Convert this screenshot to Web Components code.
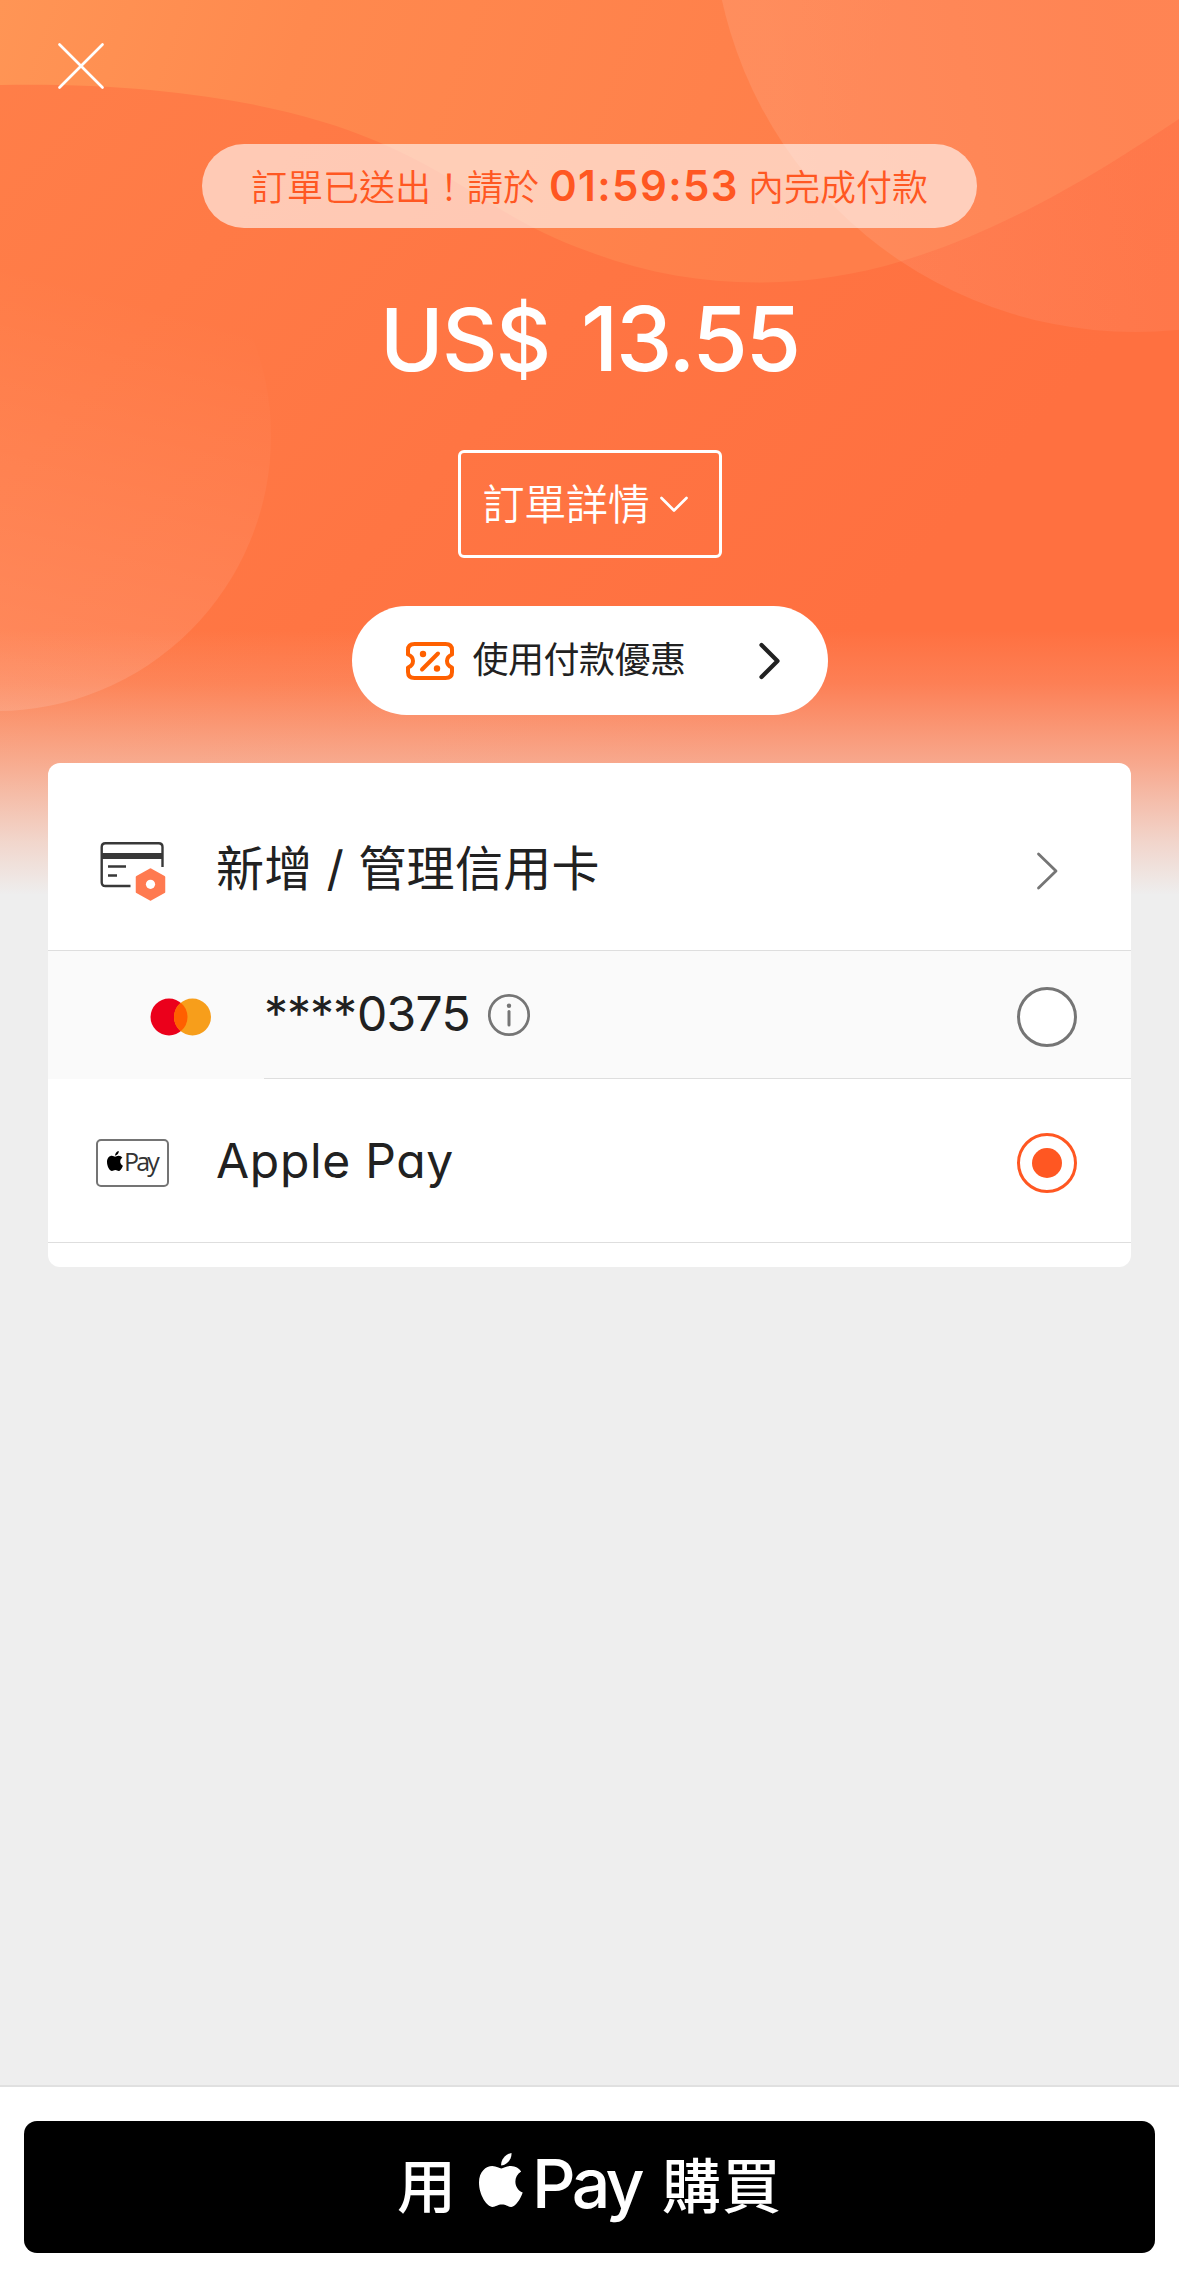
<!DOCTYPE html>
<html lang="zh-Hant">
<head>
<meta charset="utf-8">
<title>Checkout</title>
<style>
  html, body { margin: 0; padding: 0; }
  body { width: 1179px; height: 2277px; overflow: hidden; background: #eeeeee; font-family: Inter, "Noto Sans CJK TC", sans-serif; color: #212121; }
</style>
</head>
<body>
<payment-page></payment-page>
<script>
const define = (name, html, extra) => {
  const tpl = document.createElement('template');
  tpl.innerHTML = html;
  customElements.define(name, class extends HTMLElement {
    constructor() {
      super();
      this.attachShadow({ mode: 'open' }).appendChild(tpl.content.cloneNode(true));
    }
    connectedCallback() { if (extra) extra(this); }
  });
};

// Single line whose tracking is adjusted so that it fills the given width.
define('fit-text', `
<style>
  :host { display: block; white-space: nowrap; flex: none; }
  span { display: inline-block; white-space: pre; }
</style><span><slot></slot></span>`, el => {
  const target = parseFloat(el.getAttribute('width'));
  const n = parseInt(el.getAttribute('chars')) || [...el.textContent].length;
  el.style.width = target + 'px';
  const span = el.shadowRoot.querySelector('span');
  span.style.letterSpacing = ((target - span.getBoundingClientRect().width) / n) + 'px';
});

define('hero-backdrop', `
<style>
  :host { display: block; position: absolute; inset: 0 0 auto 0; height: 900px; z-index: -1; }
  svg { display: block; }
</style>
<svg width="1179" height="900" viewBox="0 0 1179 900">
  <defs>
    <linearGradient id="base" gradientUnits="userSpaceOnUse" x1="0" y1="0" x2="800" y2="700">
      <stop offset="0" stop-color="#ff7f49"/><stop offset=".6" stop-color="#ff7543"/><stop offset="1" stop-color="#ff7040"/>
    </linearGradient>
    <linearGradient id="wave" gradientUnits="userSpaceOnUse" x1="0" y1="0" x2="800" y2="280">
      <stop offset="0" stop-color="#ff9555"/><stop offset=".35" stop-color="#ff894e"/><stop offset="1" stop-color="#ff7e4a"/>
    </linearGradient>
    <linearGradient id="ring" gradientUnits="userSpaceOnUse" x1="760" y1="0" x2="1100" y2="-60">
      <stop offset="0" stop-color="#fff" stop-opacity=".1"/><stop offset="1" stop-color="#ffd8d0" stop-opacity=".07"/>
    </linearGradient>
    <linearGradient id="orb" gradientUnits="userSpaceOnUse" x1="150" y1="300" x2="40" y2="711">
      <stop offset="0" stop-color="#fff" stop-opacity="0"/><stop offset="1" stop-color="#fff" stop-opacity=".13"/>
    </linearGradient>
    <linearGradient id="fade" x1="0" y1="0" x2="0" y2="1">
      <stop offset="0" stop-color="#eee" stop-opacity="0"/><stop offset=".2" stop-color="#eee" stop-opacity=".12"/><stop offset=".5" stop-color="#eee" stop-opacity=".44"/><stop offset=".8" stop-color="#eee" stop-opacity=".8"/><stop offset="1" stop-color="#eee"/>
    </linearGradient>
  </defs>
  <rect width="1179" height="900" fill="url(#base)"/>
  <path d="M0 85C160 82 290 104 376 141C470 181 500 220 590 252C690 290 800 292 902 261C1010 229 1110 165 1179 119V0H0Z" fill="url(#wave)"/>
  <circle cx="1135" cy="-91" r="423" fill="url(#ring)"/>
  <circle cx="-4" cy="436" r="275" fill="url(#orb)"/>
  <rect y="630" width="1179" height="265" fill="url(#fade)"/><rect y="894" width="1179" height="6" fill="#eee"/>
</svg>`);

define('close-button', `
<style>:host { display: flex; height: 144px; padding: 42px 0 0 57px; box-sizing: border-box; }</style>
<svg width="48" height="48" viewBox="0 0 48 48" fill="none" stroke="#fff" stroke-width="2.7" stroke-linecap="round"><path d="M2.5 2.5L45.5 45.5M45.5 2.5L2.5 45.5"/></svg>`);

define('countdown-pill', `
<style>
  :host { display: flex; align-items: center; width: 775px; height: 84px; box-sizing: border-box; padding-left: 49px; border-radius: 42px; background: rgba(255,255,255,.6); color: #ff5722; font-size: 36px; font-weight: 350; line-height: 84px; }
  .cjk { padding-top: 3px; }
  .time { font-size: 42px; font-weight: 600; margin: 0 9px 0 10px; }
</style>
<fit-text class="cjk" width="288">訂單已送出！請於</fit-text><fit-text class="time" width="190">01:59:53</fit-text><fit-text class="cjk" width="180">內完成付款</fit-text>`);

define('order-total', `
<style>
  :host { display: flex; align-items: baseline; height: 222px; color: #fff; font-size: 86px; font-weight: 500; line-height: 222px; }
</style>
<slot></slot>`);

define('details-button', `
<style>
  :host { display: flex; align-items: center; width: 264px; height: 108px; box-sizing: border-box; border: 3px solid #fff; border-radius: 6px; padding-left: 22px; gap: 9px; color: #fff; font-size: 42px; font-weight: 350; }
  fit-text { padding-bottom: 5px; }
</style>
<fit-text width="167" chars="4"><slot></slot></fit-text>
<svg width="30" height="18" viewBox="0 0 30 18" fill="none" stroke="#fff" stroke-width="2.7" stroke-linecap="round" stroke-linejoin="round"><path d="M2.5 3L15 15.5L27.5 3"/></svg>`);

define('coupon-button', `
<style>
  :host { display: flex; align-items: center; width: 476px; height: 109px; margin-top: 48px; box-sizing: border-box; padding: 0 46px 0 53px; border-radius: 54.5px; background: #fff; color: #212121; font-size: 36px; line-height: 111px; }
  fit-text { margin-left: 18px; }
  .go { margin-left: auto; }
</style>
<svg width="50" height="40" viewBox="0 0 50 40" fill="none" stroke="#ff6000" stroke-width="4" stroke-linejoin="round" stroke-linecap="round">
  <path d="M9.5 3H40.500Q47 3 47 9V13.500Q42 15.500 42 20Q42 24.500 47 26.500V31Q47 37 40.500 37H9.500Q3 37 3 31V26.500Q8 24.500 8 20Q8 15.500 3 13.500V9Q3 3 9.500 3Z"/>
  <path d="M17 28.500L33 12.500"/><circle cx="18" cy="13" r="3.2" fill="#ff6000" stroke="none"/><circle cx="32" cy="27.500" r="3.200" fill="#ff6000" stroke="none"/>
</svg>
<fit-text width="213" chars="6"><slot></slot></fit-text>
<svg class="go" width="24" height="40" viewBox="0 0 24 40" fill="none" stroke="#212121" stroke-width="4.200" stroke-linecap="round" stroke-linejoin="round"><path d="M3.500 4L19.500 20L3.500 36"/></svg>`);

define('radio-mark', `
<style>
  :host { display: flex; width: 60px; height: 60px; box-sizing: border-box; border: 3px solid #757575; border-radius: 50%; align-items: center; justify-content: center; background: #fff; }
  :host([checked]) { border-color: #ff5722; }
  i { width: 30px; height: 30px; border-radius: 50%; }
  :host([checked]) i { background: #ff5722; }
</style><i></i>`);

define('method-row', `
<style>
  :host { display: flex; box-sizing: border-box; position: relative; align-items: center; font-size: 48px; padding-right: 54px; border-bottom: 1px solid #dedede; }
  .icon { display: flex; align-items: center; flex: none; width: var(--lead, 168px); box-sizing: border-box; padding: 4px 0 0 var(--inset, 48px); }
  .label { display: flex; align-items: center; }
  .end { margin-left: auto; display: flex; padding-top: 4px; }
</style>
<div class="icon"><slot name="icon"></slot></div><div class="label"><slot></slot></div><div class="end"><slot name="end"></slot></div>`);

define('manage-card-icon', `
<style>:host { display: block; } svg { display: block; }</style>
<svg width="70" height="62" viewBox="96 840 70 62" fill="none" stroke="#383838" stroke-width="2.400">
  <path d="M162.500 867V847Q162.500 843.200 158.700 843.200H105.500Q101.700 843.200 101.700 847V882.200Q101.700 886 105.500 886H130.500"/>
  <path d="M102 856H162" stroke-width="6"/><path d="M108 866.500H126M108 875.500H117" stroke-width="2.700"/>
  <path d="M150.500 869.500L164 877V892L150.500 899.500L137 892V877Z" fill="#ff7a50" stroke="#ff7a50" stroke-width="2.500" stroke-linejoin="round"/>
  <circle cx="150.500" cy="884.300" r="4.600" fill="#fff" stroke="none"/>
</svg>`);

define('mastercard-icon', `
<style>:host { display: block; } svg { display: block; }</style>
<svg width="64" height="38" viewBox="0 0 64 38"><circle cx="20" cy="19" r="18.500" fill="#eb001b"/><circle cx="43.500" cy="19" r="18.500" fill="#f79e1b"/><path d="M31.750 4.700A18.500 18.500 0 0 1 31.750 33.300A18.500 18.500 0 0 1 31.750 4.700Z" fill="#ff5f00"/></svg>`);

define('apple-mark', `
<style>:host { display: block; } svg { display: block; width: 100%; height: 100%; }</style>
<svg viewBox="0 0 44 54" fill="currentColor" preserveAspectRatio="none"><path d="M32.500 0C33 5.500 28.500 12 22.200 12.500C21.500 7.500 26.500 1 32.500 0Z"/><path d="M22.300 15.400C24.500 15.400 27.500 12.900 32 12.900C36.500 12.900 40 15.200 42.200 18.400C33.500 23.500 35 36 43.700 39.500C41.500 46 36.500 53.800 32.300 53.900C28.500 54 27.500 51.600 23 51.600C18.500 51.600 17 53.900 13.500 53.900C8 53.900 0 42 0 29.500C0 18.500 7 12.900 13.300 12.900C17.500 12.900 20.500 15.400 22.300 15.400Z"/></svg>`);

define('apple-pay-badge', `
<style>
  :host { display: flex; width: 73px; height: 48px; box-sizing: border-box; border: 2px solid #747474; border-radius: 5px; padding: 0 0 3px 9px; align-items: center; font-size: 25px; color: #333; line-height: 43px; }
  apple-mark { width: 16px; height: 20px; color: #000; margin-right: 1px; }
  fit-text { font-family: "Open Sans", sans-serif; }
</style><apple-mark></apple-mark><fit-text width="33">Pay</fit-text>`);

define('methods-card', `
<style>
  :host { display: block; width: 1083px; height: 504px; margin-top: 48px; border-radius: 12px; background: #fff; overflow: hidden; }
  .manage { height: 188px; padding-top: 25px; }
  .card { height: 128px; background: #fafafa; --lead: 216px; --inset: 101px; border-bottom: 0; }
  .card::after { content: ""; position: absolute; left: 216px; right: 0; bottom: 0; height: 1px; background: #dedede; }
  .apple { height: 164px; }
  .manage fit-text { padding-bottom: 8px; }
  .card fit-text { padding-bottom: 3px; }
  .stars { margin-right: 1px; }
  .info { margin-left: 17px; }
  .apple fit-text { font-feature-settings: "cv11"; }
</style>
<method-row class="manage">
  <manage-card-icon slot="icon"></manage-card-icon>
  <fit-text width="384">新增 / 管理信用卡</fit-text>
  <svg slot="end" style="margin-right:18px" width="24" height="40" viewBox="0 0 24 40" fill="none" stroke="#757575" stroke-width="2.800" stroke-linecap="round" stroke-linejoin="round"><path d="M3.500 3L21 20L3.500 37"/></svg>
</method-row>
<method-row class="card">
  <mastercard-icon slot="icon"></mastercard-icon>
  <fit-text class="stars" width="92">****</fit-text><fit-text width="113">0375</fit-text>
  <svg class="info" width="44" height="44" viewBox="0 0 44 44" fill="none" stroke="#757575" stroke-width="2.700" stroke-linecap="round"><circle cx="22" cy="22" r="19.700"/><path d="M22 18.500V32" stroke-width="3"/><circle cx="22" cy="12.700" r="2.200" fill="#757575" stroke="none"/></svg>
  <radio-mark slot="end"></radio-mark>
</method-row>
<method-row class="apple">
  <apple-pay-badge slot="icon"></apple-pay-badge>
  <fit-text width="238">Apple Pay</fit-text>
  <radio-mark slot="end" checked></radio-mark>
</method-row>`);

define('pay-footer', `
<style>
  :host { display: flex; flex-direction: column; margin-top: auto; align-self: stretch; height: 192px; box-sizing: border-box; border-top: 2px solid #e0e0e0; background: #fff; padding: 34px 24px 24px; }
  .btn { display: flex; align-items: center; height: 132px; border-radius: 13px; background: #000; color: #fff; font-size: 59px; font-weight: 500; line-height: 130px; padding-left: 373px; }
  apple-mark { width: 44px; height: 54px; margin: -14px 9px 0 23px; }
  .pay { font-size: 68px; padding-bottom: 9px; }
  .buy { margin-left: 21px; }
</style>
<div class="btn"><fit-text width="59">用</fit-text><apple-mark></apple-mark><fit-text class="pay" width="109">Pay</fit-text><fit-text class="buy" width="120">購買</fit-text></div>`);

define('payment-page', `
<style>
  :host { display: flex; flex-direction: column; align-items: center; position: relative; z-index: 0; width: 1179px; height: 2277px; background: #eee; }
  close-button { align-self: stretch; }
  .currency { word-spacing: 10px; }
  .amount { font-size: 90px; }
</style>
<hero-backdrop></hero-backdrop>
<close-button></close-button>
<countdown-pill></countdown-pill>
<order-total><fit-text class="currency" width="201">US$ </fit-text><fit-text class="amount" width="218">13.55</fit-text></order-total>
<details-button>訂單詳情</details-button>
<coupon-button>使用付款優惠</coupon-button>
<methods-card></methods-card>
<pay-footer></pay-footer>`);
</script>
</body>
</html>
